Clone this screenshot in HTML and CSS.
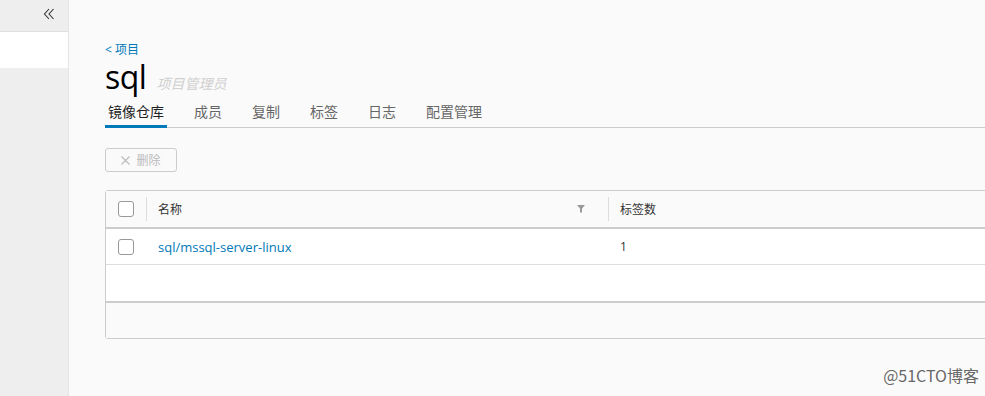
FILE: index.html
```html
<!DOCTYPE html>
<html lang="zh">
<head>
    <meta charset="utf-8">
    <title>sql - 项目</title>
    <link rel="stylesheet" href="styles.css">
</head>
<body>
<div class="layout">
    <aside class="sidebar">
        <div class="collapse">
            <svg width="14" height="14" viewBox="0 0 14 14"><path d="M7 2 L2.5 7 L7 12 M11.5 2 L7 7 L11.5 12" fill="none" stroke="#333" stroke-width="1.1"/></svg>
        </div>
        <div class="nav-item active"></div>
    </aside>

    <main class="content">
        <a class="back" href="#">&lt; 项目</a>
        <div class="title-row">
            <h1>sql</h1>
            <span class="role">项目管理员</span>
        </div>

        <nav class="tabs">
            <a class="tab active" href="#">镜像仓库</a>
            <a class="tab" href="#">成员</a>
            <a class="tab" href="#">复制</a>
            <a class="tab" href="#">标签</a>
            <a class="tab" href="#">日志</a>
            <a class="tab" href="#">配置管理</a>
        </nav>

        <div class="toolbar">
            <button class="btn" disabled>
                <svg class="x" width="9" height="9" viewBox="0 0 9 9"><path d="M0.5 0.5 L8.5 8.5 M8.5 0.5 L0.5 8.5" stroke="#bbb" stroke-width="1.1"/></svg>
                删除
            </button>
        </div>

        <div class="grid">
            <div class="row head">
                <div class="cell check"><span class="box"></span></div>
                <div class="cell name">
                    <span>名称</span>
                    <svg class="filter" width="8" height="8" viewBox="0 0 8 8"><path d="M0 0 H8 L5 3.5 V7.5 H3 V3.5 Z" fill="#999"/></svg>
                </div>
                <div class="cell tags">标签数</div>
            </div>
            <div class="row">
                <div class="cell check"><span class="box"></span></div>
                <div class="cell name"><a href="#">sql/mssql-server-linux</a></div>
                <div class="cell tags">1</div>
            </div>
            <div class="row empty"></div>
            <div class="foot"></div>
        </div>
    </main>
</div>
<div class="watermark">@51CTO博客</div>
</body>
</html>
```

FILE: styles.css
```css
* { box-sizing: border-box; }
body { margin: 0; background: #fafafa; color: #333; font-family: "Open Sans", "Noto Sans CJK SC", sans-serif; overflow: hidden; }
a { text-decoration: none; }

.layout { display: flex; height: 396px; }
.sidebar { width: 69px; flex-shrink: 0; background: #eeeeee; border-right: 1px solid #e4e4e4; }
.collapse { height: 32px; display: flex; justify-content: flex-end; align-items: center; padding: 0 12px 4px 0; border-bottom: 1px solid #e0e0e0; }
.nav-item.active { height: 36px; background: #fff; }

.content { flex: 1; padding: 43px 0 0 36px; min-width: 0; }
.back { display: block; font-size: 12px; color: #0079b8; line-height: 14px; }
.title-row { display: flex; align-items: baseline; gap: 10px; margin-top: 4px; height: 32px; }
h1 { margin: 0; font-weight: 400; font-size: 32px; line-height: 32px; color: #000; letter-spacing: -0.5px; }
.role { font-size: 14px; font-style: italic; color: #d0d0d0; }

.tabs { display: flex; gap: 24px; margin-top: 6px; border-bottom: 1px solid #ccc; }
.tab { padding: 0 3px; font-size: 14px; line-height: 26px; color: #666; border-bottom: 3px solid transparent; margin-bottom: -1px; }
.tab.active { color: #222; border-bottom-color: #0079b8; }

.toolbar { margin-top: 20px; }
.btn { height: 24px; width: 72px; font: inherit; font-size: 12px; color: #bbb; background: transparent; border: 1px solid #ccc; border-radius: 3px; padding: 0; display: flex; align-items: center; justify-content: center; gap: 6px; }

.grid { margin-top: 18px; width: 900px; border: 1px solid #ccc; border-radius: 3px; background: #fff; font-size: 12px; }
.row { display: flex; height: 36px; align-items: center; border-bottom: 1px solid #ddd; }
.row.head { height: 38px; background: #fafafa; border-bottom: 2px solid #ccc; color: #333; }
.row.empty { height: 38px; border-bottom: 2px solid #ccc; }
.cell { padding: 0 12px; height: 100%; display: flex; align-items: center; }
.cell.check { width: 40px; padding-left: 12px; }
.cell.name { width: 462px; justify-content: space-between; }
.head .cell { position: relative; }
.head .cell.name::before, .head .cell.tags::before { content: ""; position: absolute; left: 0; top: 6px; bottom: 6px; border-left: 1px solid #ddd; }
.filter { margin-right: 11px; }
.name a { color: #0079b8; font-size: 13px; }
.box { width: 16px; height: 16px; border: 1px solid #999; border-radius: 3px; background: #fff; }
.foot { height: 35px; background: #fafafa; }

.watermark { position: absolute; right: 6px; bottom: 9px; font-size: 16px; color: #666; text-shadow: 0 0 2px #fff; font-family: "Noto Sans CJK SC", sans-serif; }
```
